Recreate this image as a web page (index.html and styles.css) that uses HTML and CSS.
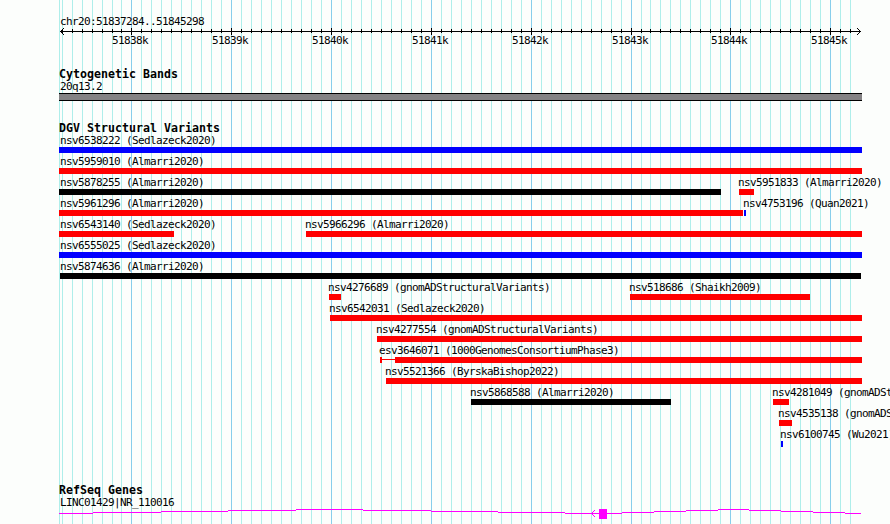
FILE: index.html
```html
<!DOCTYPE html>
<html>
    <head>
        <meta charset="utf-8">
        <title>chr20:51837284..51845298</title>
        <link rel="stylesheet" href="styles.css">
    </head>
    <body>
        <div class="browser">
            <svg class="grid" id="grid" width="890" height="524"></svg>
            <div class="track ruler">
                <div class="label region">chr20:51837284..51845298</div>
                <svg class="axis" id="axis" width="803" height="9"></svg>
                <div class="ticks" id="ticks"></div>
            </div>
            <div class="track bands">
                <div class="title">Cytogenetic Bands</div>
                <div class="label">20q13.2</div>
                <div class="band"></div>
            </div>
            <div class="track variants">
                <div class="title">DGV Structural Variants</div>
                <div id="variants"></div>
            </div>
            <div class="track genes">
                <div class="title">RefSeq Genes</div>
                <div class="label">LINC01429|NR_110016</div>
                <svg class="gene" width="803" height="14" shape-rendering="crispEdges">
                    <path class="intron" d="M0 6.5h34M34 5.5h68M102 4.5h67M169 3.5h68M237 2.5h67M304 3.5h68M372 4.5h67M439 5.5h67M506 6.5h57M563 5.5h32M595 4.5h32M627 3.5h32M659 2.5h31M690 3.5h32M722 4.5h32M754 5.5h32M786 6.5h16"/>
                    <path class="strand" d="M535 3h1v1h-1zM534 4h1v1h-1zM533 5h1v1h-1zM532 6h1v1h-1zM533 7h1v1h-1zM534 8h1v1h-1zM535 9h1v1h-1z"/>
                    <rect class="exon" x="540" y="2" width="8" height="10"/>
                </svg>
            </div>
        </div>
        <script>
            const LEFT = 59
            const RIGHT = 862

            // [name, start, end, type]
            const rows = [
                [['nsv6538222 (Sedlazeck2020)', 59, 862, 'gain']],
                [['nsv5959010 (Almarri2020)', 59, 862, 'loss']],
                [['nsv5878255 (Almarri2020)', 59, 721, 'other'], ['nsv5951833 (Almarri2020)', 739, 754, 'loss']],
                [['nsv5961296 (Almarri2020)', 59, 743, 'loss'], ['nsv4753196 (Quan2021)', 744, 746, 'gain']],
                [['nsv6543140 (Sedlazeck2020)', 59, 174, 'loss'], ['nsv5966296 (Almarri2020)', 306, 862, 'loss']],
                [['nsv6555025 (Sedlazeck2020)', 59, 862, 'gain']],
                [['nsv5874636 (Almarri2020)', 60, 861, 'other']],
                [['nsv4276689 (gnomADStructuralVariants)', 329, 341, 'loss'], ['nsv518686 (Shaikh2009)', 630, 810, 'loss']],
                [['nsv6542031 (Sedlazeck2020)', 330, 862, 'loss']],
                [['nsv4277554 (gnomADStructuralVariants)', 377, 862, 'loss']],
                [['esv3646071 (1000GenomesConsortiumPhase3)', 380, 862, 'loss split']],
                [['nsv5521366 (ByrskaBishop2022)', 386, 862, 'loss']],
                [['nsv5868588 (Almarri2020)', 471, 671, 'other'], ['nsv4281049 (gnomADStructuralVariants)', 773, 789, 'loss']],
                [['nsv4535138 (gnomADStructuralVariants)', 779, 792, 'loss']],
                [['nsv6100745 (Wu2021)', 781, 783, 'gain']]
            ]

            document.querySelector('#variants').innerHTML = rows.map((row) => {
                let x = LEFT
                const items = row.map(([name, start, end, type]) => {
                    const gap = start - x
                    x = end
                    const edge = start === LEFT ? ' edge' : start === LEFT + 1 ? ' near' : ''
                    return `<div class="feature${edge}" style="margin-left:${gap}px;width:${end - start}px">
                        <div class="label">${name}</div><div class="bar ${type}"></div></div>`
                })
                return `<div class="row">${items.join('')}</div>`
            }).join('')

            // tick positions, one every 100 bp
            const minor = []
            for (let x = 62; x <= 112; x += 10) minor.push(x)
            for (let x = 121; x <= 641; x += 10) minor.push(x)
            for (let x = 650; x <= 850; x += 10) minor.push(x)
            const major = [131, 231, 331, 431, 531, 631, 730, 830]

            const rect = (x, y, w, h, c) => `<rect class="${c}" x="${x}" y="${y}" width="${w}" height="${h}"/>`
            document.querySelector('#grid').innerHTML = [LEFT, ...minor].map((x) =>
                rect(x, 0, 1, 524, major.includes(x) ? 'line-major' : 'line-minor')
            ).join('')

            let axis = rect(1, 4, 801, 1, 'tick')
            minor.forEach((x) => {
                axis += major.includes(x) ? rect(x - LEFT, 1, 1, 7, 'tick') : rect(x - LEFT, 2, 1, 4, 'tick')
            })
            for (let i = 1; i <= 3; i++) {
                axis += rect(1 + i, 4 - i, 1, 1, 'tick') + rect(1 + i, 4 + i, 1, 1, 'tick')
                axis += rect(801 - i, 4 - i, 1, 1, 'tick') + rect(801 - i, 4 + i, 1, 1, 'tick')
            }
            document.querySelector('#axis').innerHTML = axis

            let end = LEFT
            document.querySelector('#ticks').innerHTML = major.map((x, i) => {
                const gap = x - 19 - end
                end = x - 19 + 36
                return `<div class="label" style="margin-left:${gap}px">${51838 + i}k</div>`
            }).join('')
        </script>
    </body>
</html>
```

FILE: styles.css
```css
body {
    margin: 0;
    background: #fcfefc;
    color: #000;
    font-family: "DejaVu Sans Mono", monospace;
    overflow: hidden;
}
.browser {
    position: relative;
    width: 831px;
    height: 524px;
    padding-left: 59px;
    overflow: hidden;
}
.grid {
    position: absolute;
    left: 0;
    top: 0;
    z-index: -1;
}
.line-minor {
    fill: #aeeeea;
}
.line-major {
    fill: #87ceeb;
}
.label {
    height: 13px;
    font-size: 11px;
    line-height: 13px;
    letter-spacing: -0.622px;
    white-space: pre;
    padding-left: 1px;
}
.title {
    height: 12px;
    font-size: 11.6px;
    font-weight: bold;
    line-height: 12px;
    letter-spacing: 0.016px;
    white-space: pre;
}
.track {
    display: flex;
    flex-direction: column;
}
.ruler {
    height: 53px;
    padding-top: 15px;
}
.region {
    height: 12px;
}
.axis {
    display: block;
}
.tick {
    fill: #000;
}
.ticks {
    display: flex;
    margin-top: -2px;
}
.ticks .label {
    width: 36px;
    padding-left: 0;
}
.bands {
    height: 54px;
}
.band {
    width: 803px;
    height: 6px;
    background: #848284;
    border-top: 1px solid #000;
    border-bottom: 1px solid #000;
}
.variants {
    height: 362px;
}
.row {
    display: flex;
    height: 21px;
}
.feature {
    flex: none;
}
.feature .label {
    width: 0;
    padding-left: 0;
    margin-left: -1px;
}
.feature.edge .label {
    margin-left: 1px;
}
.feature.near .label {
    margin-left: 0;
}
.bar {
    height: 6px;
}
.gain {
    background: #00f;
}
.loss {
    background: #f00;
}
.other {
    background: #000;
}
/* two segments joined by a thin connector */
.split {
    background:
        linear-gradient(#f00, #f00) 0 0 / 2px 6px no-repeat,
        linear-gradient(#f00, #f00) 0 2px / 15px 1px no-repeat,
        linear-gradient(#f00, #f00) 15px 0 / 467px 6px no-repeat;
}
.gene {
    display: block;
    margin-top: -2px;
}
.intron {
    fill: none;
    stroke: #f0f;
}
.strand, .exon {
    fill: #f0f;
}
```
